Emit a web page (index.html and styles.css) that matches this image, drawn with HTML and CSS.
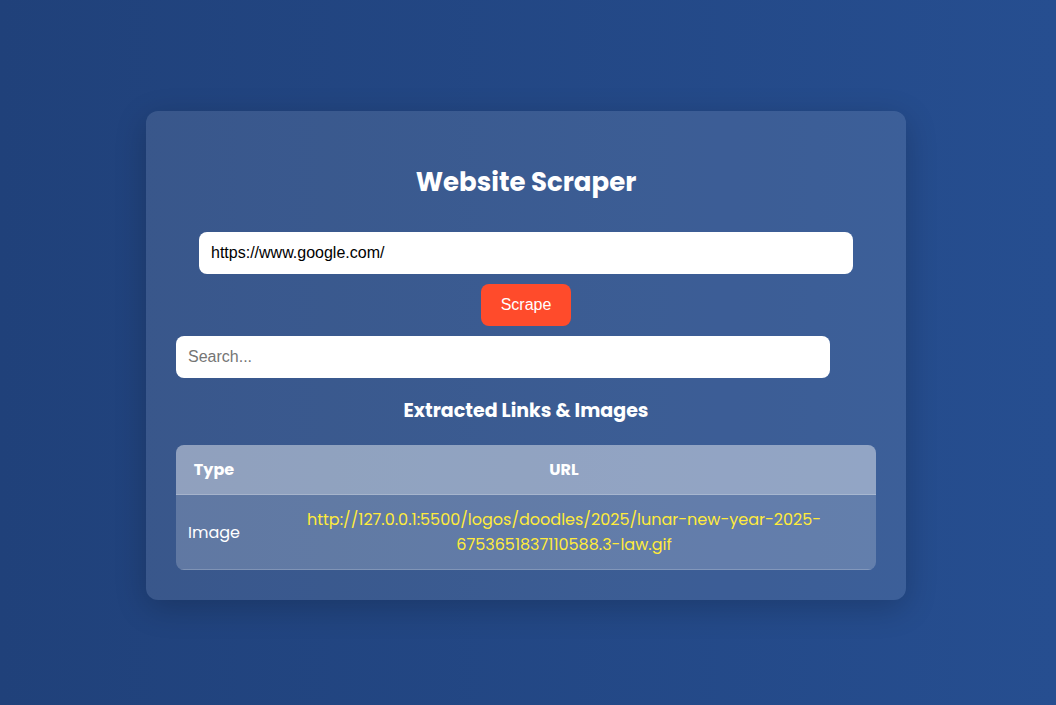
FILE: index.html
```html
<!DOCTYPE html>
<html lang="en">
<head>
<meta charset="utf-8">
<meta name="viewport" content="width=device-width, initial-scale=1">
<title>Website Scraper</title>
<link rel="stylesheet" href="styles.css">
</head>
<body>
<main class="container">
  <h1 class="title">Website Scraper</h1>
  <form class="scrape-form">
    <input class="field" type="text" aria-label="Website URL" value="https://www.google.com/">
    <button class="scrape-button" type="button">Scrape</button>
  </form>
  <input class="field search" type="text" aria-label="Search results" placeholder="Search...">
  <h2 class="subtitle">Extracted Links &amp; Images</h2>
  <table class="results">
    <thead>
      <tr><th class="type-column">Type</th><th>URL</th></tr>
    </thead>
    <tbody>
      <tr>
        <td class="type-column">Image</td>
        <td><a class="link" href="http://127.0.0.1:5500/logos/doodles/2025/lunar-new-year-2025-6753651837110588.3-law.gif">http://127.0.0.1:5500/logos/doodles/2025/lunar-new-year-2025-<wbr>6753651837110588.3-law.gif</a></td>
      </tr>
    </tbody>
  </table>
</main>
</body>
</html>
```
FILE: styles.css
```css
* {
  box-sizing: border-box;
}

body {
  margin: 0;
  min-height: 100vh;
  padding: 20px 24px 14px 20px;
  display: flex;
  align-items: center;
  justify-content: center;
  background: linear-gradient(to right, #20417a, #264e90);
  color: #fff;
  font-family: Poppins, Inter, "Open Sans", sans-serif;
  font-size: 16px;
}

.container {
  width: 100%;
  max-width: 760px;
  padding: 50px 30px 30px;
  border-radius: 12px;
  background: rgba(255, 255, 255, 0.11);
  box-shadow: 0 8px 32px rgba(0, 0, 0, 0.2);
}

.title {
  margin: 0 0 28px;
  font-size: 26px;
  line-height: 43px;
  font-weight: 700;
  text-align: center;
}

.scrape-form {
  display: flex;
  flex-direction: column;
  align-items: center;
  gap: 10px;
}

.field {
  display: block;
  width: 654px;
  max-width: 100%;
  height: 42px;
  padding: 0 12px;
  border: 0;
  border-radius: 8px;
  background: #fff;
  color: #000;
  font: 16px "Liberation Sans", Arial, sans-serif;
}

.field::placeholder {
  color: #757575;
}

.scrape-button {
  height: 42px;
  padding: 0 20px;
  border: 0;
  border-radius: 8px;
  background: #ff4b2b;
  color: #fff;
  font: 16px "Liberation Sans", Arial, sans-serif;
}

.search {
  margin-top: 10px;
}

.subtitle {
  margin: 18px 0 20px;
  font-size: 19px;
  line-height: 29px;
  font-weight: 700;
  text-align: center;
}

.results {
  width: 100%;
  border-spacing: 0;
  border-radius: 8px;
  overflow: hidden;
  background: rgba(255, 255, 255, 0.2);
  text-align: center;
  line-height: 25px;
}

.results th,
.results td {
  padding: 12px;
  border-bottom: 1px solid rgba(255, 255, 255, 0.2);
}

.results th {
  background: rgba(255, 255, 255, 0.3);
}

.results .type-column {
  width: 76px;
}

.link {
  color: #ffeb3b;
  font-weight: 400;
  text-decoration: none;
}
```
